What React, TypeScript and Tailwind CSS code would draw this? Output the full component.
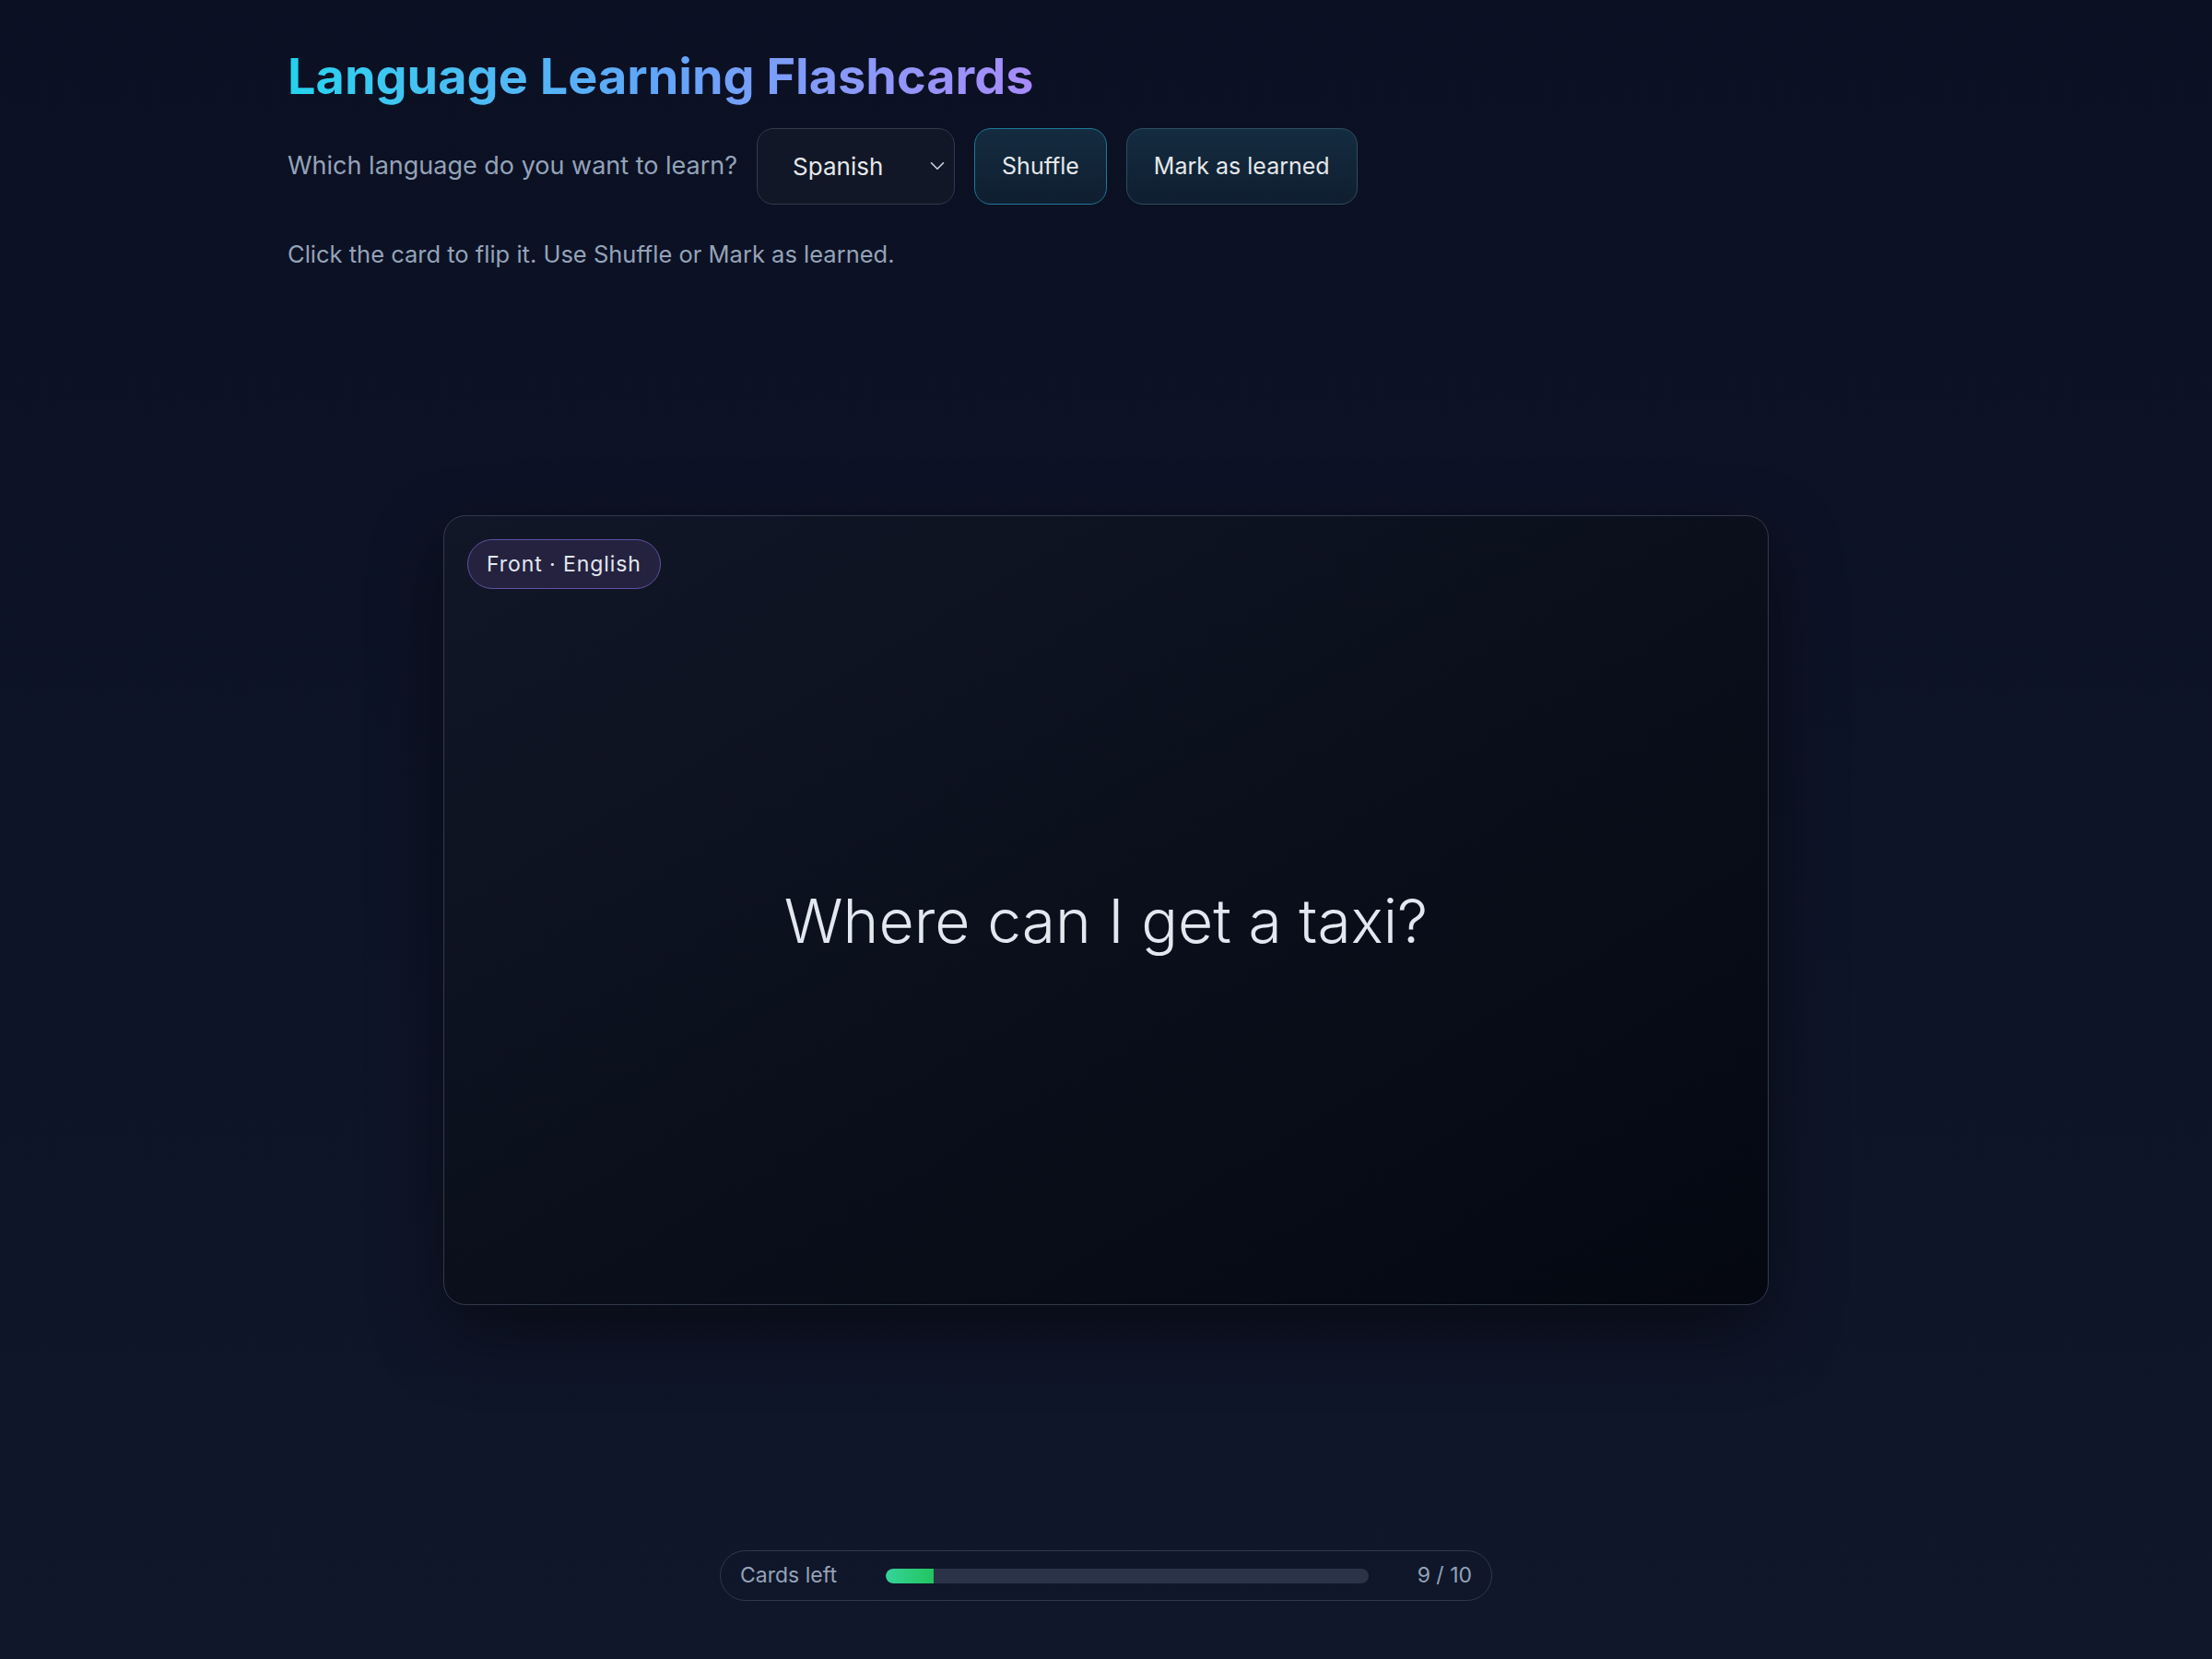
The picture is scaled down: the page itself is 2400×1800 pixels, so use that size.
import { useState } from "react";
import { ChevronDown } from "lucide-react";

const cards = [
  { en: "Where can I get a taxi?", es: "¿Dónde puedo tomar un taxi?" },
  { en: "How much does it cost?", es: "¿Cuánto cuesta?" },
  { en: "Good morning", es: "Buenos días" },
  { en: "Thank you very much", es: "Muchas gracias" },
  { en: "Where is the bathroom?", es: "¿Dónde está el baño?" },
  { en: "I don't understand", es: "No entiendo" },
  { en: "Nice to meet you", es: "Mucho gusto" },
  { en: "See you later", es: "Hasta luego" },
  { en: "Can you help me?", es: "¿Puede ayudarme?" },
  { en: "What time is it?", es: "¿Qué hora es?" },
];

export default function App() {
  const [index, setIndex] = useState(0);
  const [flipped, setFlipped] = useState(false);
  const [learned, setLearned] = useState(1);
  const card = cards[index];
  const left = cards.length - learned;

  const shuffle = () => {
    setIndex(Math.floor(Math.random() * cards.length));
    setFlipped(false);
  };

  const markLearned = () => {
    setLearned((n) => Math.min(cards.length, n + 1));
    setIndex((i) => (i + 1) % cards.length);
    setFlipped(false);
  };

  return (
    <div className="flex min-h-screen flex-col bg-linear-to-b from-[#0b1023] to-[#10172a] font-['Inter',sans-serif] text-slate-200">
      <header className="mx-auto w-full max-w-[1776px] pt-[51px]">
        <h1 className="inline-block bg-linear-to-r from-[#22d3ee] via-[#60a5fa] to-[#a78bfa] bg-clip-text text-[54px] font-bold leading-[1.2] text-transparent">
          Language Learning Flashcards
        </h1>

        <div className="mt-[23px] flex items-center gap-[21px]">
          <label className="text-[27px] text-[#94a3b8]">Which language do you want to learn?</label>
          <div className="relative">
            <select className="h-[83px] w-[215px] appearance-none rounded-[18px] border-[1.5px] border-[#333a49] bg-[#111726] pl-[38px] text-[26px] text-[#e5e7eb] outline-none">
              <option>Spanish</option>
              <option>French</option>
              <option>German</option>
            </select>
            <ChevronDown className="pointer-events-none absolute right-[6px] top-1/2 size-[26px] -translate-y-1/2 text-[#cbd5e1]" strokeWidth={1.5} />
          </div>
          <button
            type="button"
            onClick={shuffle}
            className="h-[83px] rounded-[18px] border-[1.5px] border-[#1f7898] bg-linear-to-b from-[#142c40] to-[#0f1e30] px-[29px] text-[25px] text-[#e5e7eb]"
          >
            Shuffle
          </button>
          <button
            type="button"
            onClick={markLearned}
            className="h-[83px] rounded-[18px] border-[1.5px] border-[#2e4d60] bg-linear-to-b from-[#142c40] to-[#0f1e30] px-[29px] text-[25px] text-[#e5e7eb]"
          >
            Mark as learned
          </button>
        </div>

        <p className="mt-[36px] text-[25.5px] leading-[1.4] text-[#94a3b8]">
          Click the card to flip it. Use Shuffle or Mark as learned.
        </p>
      </header>

      <main className="flex flex-1 items-center justify-center">
        <div
          onClick={() => setFlipped((f) => !f)}
          className="relative flex h-[857px] w-[1438px] cursor-pointer items-center justify-center rounded-[24px] border-[1.5px] border-[#323a4b] bg-linear-to-br from-[#111727] to-[#050811] pt-[24px] shadow-[0_30px_80px_rgba(0,0,0,0.45)]"
        >
          <span className="absolute left-[25px] top-[25px] flex h-[54px] items-center rounded-full border-[1.5px] border-[#5f52a4] bg-[#24223f] px-[20px] text-[23px] tracking-[0.04em] text-[#e2e8f0]">
            {flipped ? "Back · Spanish" : "Front · English"}
          </span>
          <p className="text-[66px] font-light text-[#e2e8f0]">{flipped ? card.es : card.en}</p>
        </div>
      </main>

      <footer className="flex justify-center pb-[63px]">
        <div className="flex h-[55px] w-[838px] items-center gap-[53px] rounded-full border-[1.5px] border-[#2f384a] px-[21px] text-[23px] text-[#94a3b8]">
          <span>Cards left</span>
          <div className="h-[16px] flex-1 overflow-hidden rounded-full bg-[#2a3347]">
            <div
              className="h-full rounded-l-full bg-linear-to-r from-[#34d399] to-[#22c55e]"
              style={{ width: `${(learned / cards.length) * 100}%` }}
            />
          </div>
          <span>
            {left} / {cards.length}
          </span>
        </div>
      </footer>
    </div>
  );
}
